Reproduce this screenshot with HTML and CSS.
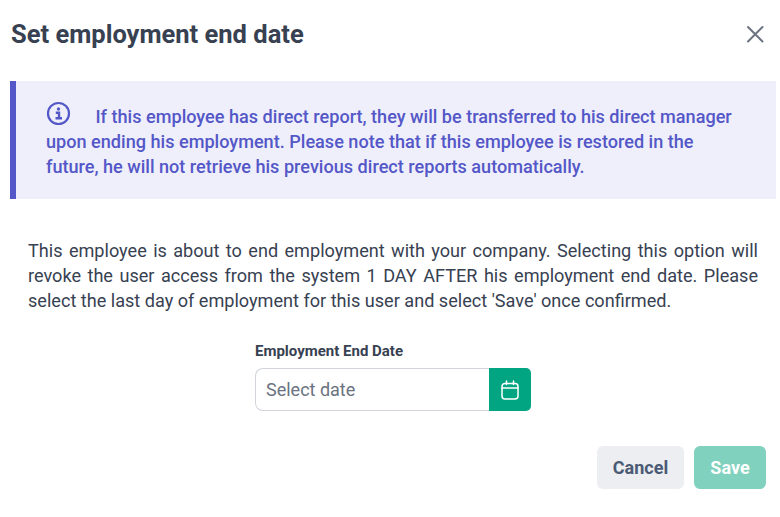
FILE: index.html
```html
<!DOCTYPE html>
<html lang="en">
<head>
    <meta charset="UTF-8">
    <title>Set employment end date</title>
    <link rel="stylesheet" href="styles.css">
</head>
<body>
    <div class="modal">
        <div class="modal-header">
            <h1>Set employment end date</h1>
            <svg class="close-icon" width="18" height="18" viewBox="0 0 18 18" fill="none" stroke="#6b7280" stroke-width="2" stroke-linecap="round">
                <path d="M2 2 L16.500 16.500 M16.500 2 L2 16.500"/>
            </svg>
        </div>
        <!-- notice -->
        <div class="notice">
            <svg class="info-icon" width="26" height="26" viewBox="0 0 26 26" fill="none" stroke="#5457c7">
                <circle cx="12.500" cy="13.500" r="10.500" stroke-width="2.200"/>
                <circle cx="12.500" cy="9" r="1.700" fill="#5457c7" stroke="none"/>
                <path d="M9.800 12.800 H13 V18 M9.500 18.300 H16" stroke-width="2.400"/>
            </svg>
            If this employee has direct report, they will be transferred to his direct manager upon ending his employment. Please note that if this employee is restored in the future, he will not retrieve his previous direct reports automatically.
        </div>
        <p class="description">This employee is about to end employment with your company. Selecting this option will revoke the user access from the system 1 DAY AFTER his employment end date. Please select the last day of employment for this user and select 'Save' once confirmed.</p>
        <div class="date-field">
            <label for="endDate">Employment End Date</label>
            <div class="date-input">
                <input type="text" id="endDate" placeholder="Select date">
                <button class="calendar-btn" type="button">
                    <svg width="20" height="20" viewBox="0 0 20 20" fill="none" stroke="#fff" stroke-width="1.500" stroke-linecap="round">
                        <rect x="2" y="3.500" width="16" height="15.500" rx="3"/>
                        <path d="M2 8 H18 M6.500 1 V4.500 M13.500 1 V4.500"/>
                    </svg>
                </button>
            </div>
        </div>
        <div class="modal-footer">
            <button class="btn btn-cancel" type="button">Cancel</button>
            <button class="btn btn-save" type="button">Save</button>
        </div>
    </div>
</body>
</html>
```

FILE: styles.css
```css
body {
    margin: 0;
    background: #fff;
    font-family: Roboto, "Liberation Sans", sans-serif;
    overflow: hidden;
}
.modal {
    width: 776px;
    height: 517px;
    padding-left: 10px;
    box-sizing: border-box;
}
.modal-header {
    display: flex;
    justify-content: space-between;
    align-items: center;
    height: 67px;
    padding-right: 12px;
}
.modal-header h1 {
    margin: 0 0 0 1px;
    font-size: 25.500px;
    font-weight: 700;
    color: #374151;
}
.notice {
    margin-top: 14px;
    height: 118px;
    box-sizing: border-box;
    padding: 19px 30px 0 30px;
    background: #efeffb;
    border-left: 6px solid #5457c7;
    color: #5457c7;
    font-size: 18.100px;
    font-weight: 500;
    line-height: 25px;
}
.info-icon {
    vertical-align: -3px;
    margin-right: 19px;
}
.description {
    margin: 39px 18px 0 18px;
    font-size: 18.100px;
    line-height: 25px;
    color: #374151;
    text-align: justify;
}
.date-field {
    width: 276px;
    margin: 28px 0 0 245px;
}
.date-field label {
    display: block;
    font-size: 15px;
    font-weight: 700;
    line-height: 20px;
    color: #374151;
    margin-bottom: 7px;
}
.date-input {
    display: flex;
    height: 43px;
}
.date-input input {
    flex: 1;
    min-width: 0;
    box-sizing: border-box;
    padding: 0 10px;
    border: 1px solid #d1d5db;
    border-right: none;
    border-radius: 8px 0 0 8px;
    font-family: inherit;
    font-size: 18px;
    color: #374151;
}
.date-input input::placeholder {
    color: #6b7280;
    opacity: 1;
}
.calendar-btn {
    width: 42px;
    padding: 0;
    border: none;
    border-radius: 0 5px 5px 0;
    background: #02a582;
    display: flex;
    align-items: center;
    justify-content: center;
}
.modal-footer {
    display: flex;
    justify-content: flex-end;
    gap: 10px;
    margin-top: 35px;
    padding-right: 10px;
}
.btn {
    height: 43px;
    border: none;
    border-radius: 6px;
    font-family: inherit;
    font-size: 18px;
    font-weight: 700;
}
.btn-cancel {
    width: 87px;
    background: #edeef1;
    color: #4b5a75;
}
.btn-save {
    width: 72px;
    background: #80d2be;
    color: #fff;
}
```
